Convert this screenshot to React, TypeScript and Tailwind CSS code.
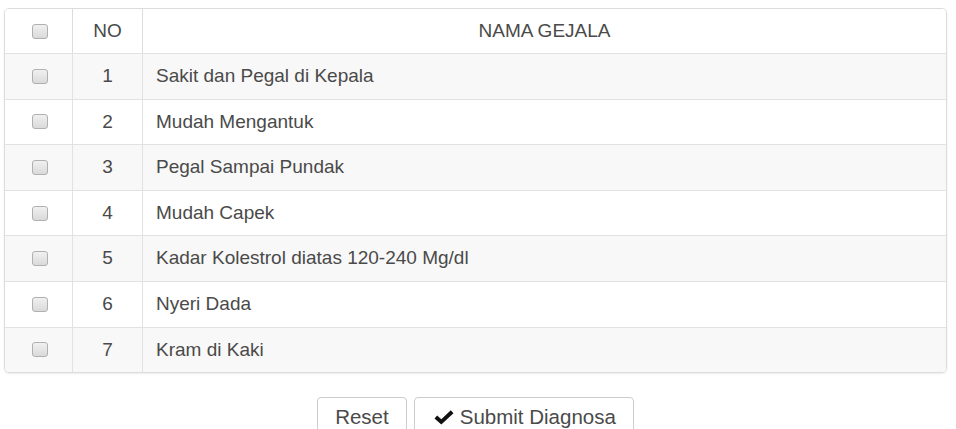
import { useState } from "react";

const gejala = [
  "Sakit dan Pegal di Kepala",
  "Mudah Mengantuk",
  "Pegal Sampai Pundak",
  "Mudah Capek",
  "Kadar Kolestrol diatas 120-240 Mg/dl",
  "Nyeri Dada",
  "Kram di Kaki",
];

const Kotak = ({ checked, onChange }: { checked: boolean; onChange: () => void }) => (
  <input
    type="checkbox"
    checked={checked}
    onChange={onChange}
    className="appearance-none w-[16px] h-[15px] rounded-[3px] border border-[#b0b0b0] bg-gradient-to-b from-[#f0f0f0] to-[#dadada] checked:from-[#9ec3ee] checked:to-[#5b8fd3] cursor-pointer"
  />
);

const App = () => {
  const [pilih, setPilih] = useState<boolean[]>(gejala.map(() => false));

  const toggle = (i: number) => {
    setPilih((p) => p.map((v, j) => (j === i ? !v : v)));
  };

  const semua = pilih.every(Boolean);

  return (
    <div className="min-h-screen bg-white pt-2 pl-1 font-['Liberation_Sans',Arial,sans-serif] text-[#4a4a4a]">
      <div className="w-[943px] border border-[#dcdcdc] rounded-[5px] overflow-hidden shadow-[0_1px_2px_rgba(0,0,0,0.08)] text-[19px]">
        <div className="grid grid-cols-[67px_70px_1fr] h-[44px] bg-white">
          <div className="flex items-center justify-center pl-[2px]">
            <Kotak checked={semua} onChange={() => setPilih(gejala.map(() => !semua))} />
          </div>
          <div className="flex items-center justify-center border-l border-[#dcdcdc]">NO</div>
          <div className="flex items-center justify-center border-l border-[#dcdcdc]">NAMA GEJALA</div>
        </div>

        {gejala.map((nama, i) => (
          <div
            key={nama}
            className={
              "grid grid-cols-[67px_70px_1fr] h-[45.6px] border-t border-[#e2e2e2] " +
              (i % 2 === 0 ? "bg-[#f8f8f8]" : "bg-white")
            }
          >
            <div className="flex items-center justify-center pl-[2px]">
              <Kotak checked={pilih[i]} onChange={() => toggle(i)} />
            </div>
            <div className="flex items-center justify-center border-l border-[#e2e2e2]">{i + 1}</div>
            <div className="flex items-center pl-[13px] border-l border-[#e2e2e2]">{nama}</div>
          </div>
        ))}
      </div>

      <div className="w-[943px] flex justify-center gap-[7px] mt-[24px] text-[20.5px]">
        <button
          type="reset"
          onClick={() => setPilih(gejala.map(() => false))}
          className="h-[40px] px-[17px] bg-white border border-[#ccc] rounded-[4px] text-[#4a4a4a]"
        >
          Reset
        </button>
        <button
          type="submit"
          className="h-[40px] pl-[19px] pr-[17px] bg-white border border-[#ccc] rounded-[4px] text-[#4a4a4a] flex items-center gap-[6px]"
        >
          <svg width="20" height="15" viewBox="0 0 20 15" className="mt-[1px]">
            <path d="M0.5 8.5 L3.2 5.6 L7.3 9.2 L16.8 0.3 L19.5 3.2 L7.3 14.5 Z" fill="#111" />
          </svg>
          Submit Diagnosa
        </button>
      </div>
    </div>
  );
};

export default App;
